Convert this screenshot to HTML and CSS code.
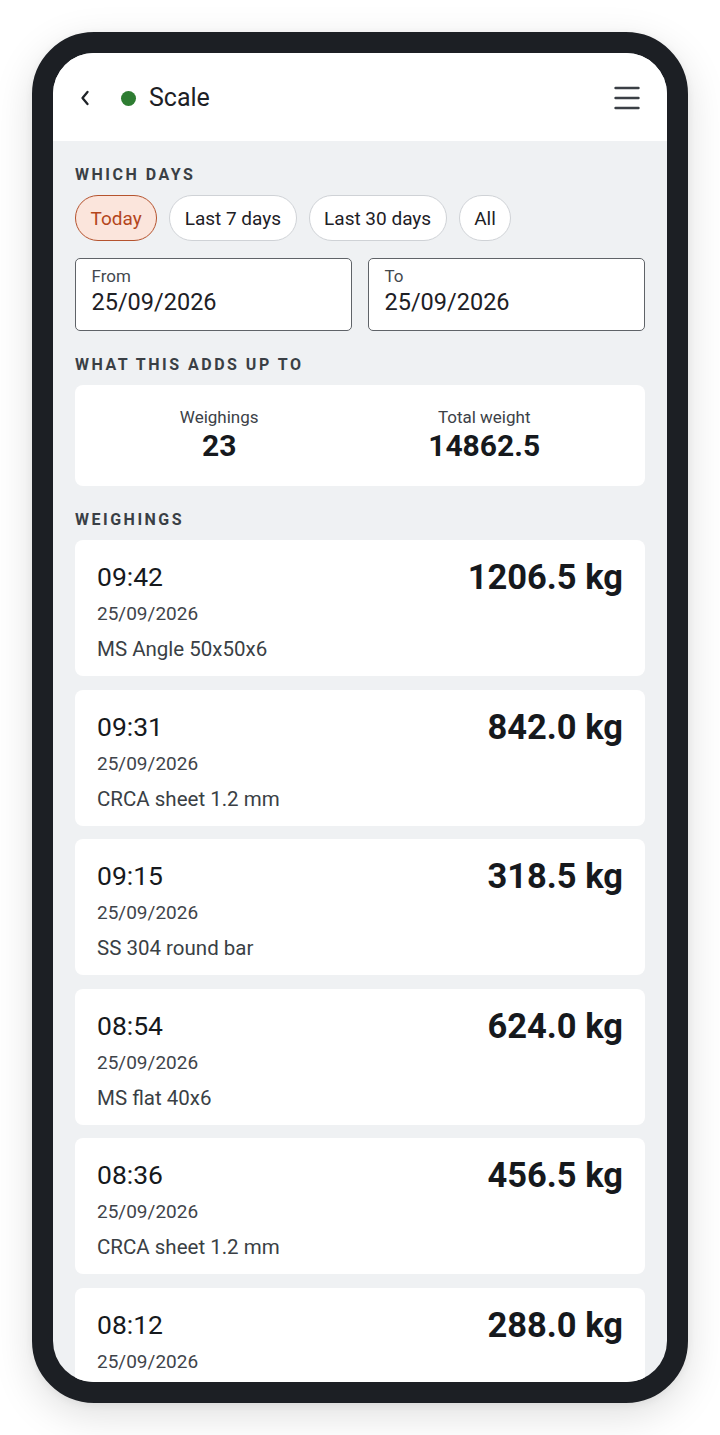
FILE: index.html
```html
<!DOCTYPE html>
<html lang="en">
<head>
<meta charset="utf-8">
<title>Scale</title>
<link rel="stylesheet" href="styles.css">
</head>
<body>
<div class="phone">
  <div class="screen">
    <header class="topbar">
      <div class="topbar-left">
        <svg class="back" width="10" height="16" viewBox="0 0 10 16" aria-hidden="true"><polyline points="7.5,2 2.5,8 7.5,14" fill="none" stroke="#1f2328" stroke-width="2.3" stroke-linecap="round" stroke-linejoin="round"/></svg>
        <span class="dot"></span>
        <span class="title">Scale</span>
      </div>
      <svg class="menu" width="26" height="24" viewBox="0 0 26 24" aria-hidden="true"><g stroke="#3b3f45" stroke-width="2.4" stroke-linecap="round"><line x1="1.5" y1="2" x2="24.5" y2="2"/><line x1="1.5" y1="12" x2="24.5" y2="12"/><line x1="1.5" y1="22" x2="24.5" y2="22"/></g></svg>
    </header>
    <main class="content">
      <section class="section">
        <h2 class="label">WHICH DAYS</h2>
        <div class="chips">
          <span class="chip chip-active">Today</span>
          <span class="chip">Last 7 days</span>
          <span class="chip">Last 30 days</span>
          <span class="chip">All</span>
        </div>
        <div class="dates">
          <div class="date-field">
            <span class="date-label">From</span>
            <span class="date-value">25/09/2026</span>
          </div>
          <div class="date-field">
            <span class="date-label">To</span>
            <span class="date-value">25/09/2026</span>
          </div>
        </div>
      </section>
      <section class="section">
        <h2 class="label">WHAT THIS ADDS UP TO</h2>
        <div class="summary">
          <div class="stat">
            <span class="stat-label">Weighings</span>
            <span class="stat-value">23</span>
          </div>
          <div class="stat">
            <span class="stat-label">Total weight</span>
            <span class="stat-value">14862.5</span>
          </div>
        </div>
      </section>
      <section class="section">
        <h2 class="label">WEIGHINGS</h2>
        <div class="list">
          <div class="card">
            <div class="card-row"><span class="time">09:42</span><span class="weight">1206.5 kg</span></div>
            <div class="date">25/09/2026</div>
            <div class="material">MS Angle 50x50x6</div>
          </div>
          <div class="card">
            <div class="card-row"><span class="time">09:31</span><span class="weight">842.0 kg</span></div>
            <div class="date">25/09/2026</div>
            <div class="material">CRCA sheet 1.2 mm</div>
          </div>
          <div class="card">
            <div class="card-row"><span class="time">09:15</span><span class="weight">318.5 kg</span></div>
            <div class="date">25/09/2026</div>
            <div class="material">SS 304 round bar</div>
          </div>
          <div class="card">
            <div class="card-row"><span class="time">08:54</span><span class="weight">624.0 kg</span></div>
            <div class="date">25/09/2026</div>
            <div class="material">MS flat 40x6</div>
          </div>
          <div class="card">
            <div class="card-row"><span class="time">08:36</span><span class="weight">456.5 kg</span></div>
            <div class="date">25/09/2026</div>
            <div class="material">CRCA sheet 1.2 mm</div>
          </div>
          <div class="card">
            <div class="card-row"><span class="time">08:12</span><span class="weight">288.0 kg</span></div>
            <div class="date">25/09/2026</div>
          </div>
        </div>
      </section>
    </main>
  </div>
</div>
</body>
</html>
```

FILE: styles.css
```css
* { box-sizing: border-box; }

html, body {
  margin: 0;
  padding: 0;
  background: #ffffff;
}

body {
  font-family: Roboto, "Noto Sans", "Liberation Sans", sans-serif;
  color: #1d2025;
  padding: 32px;
}

.phone {
  width: 656px;
  height: 1371px;
  border: 21px solid #1c1f24;
  border-radius: 62px;
  background: #1c1f24;
  box-shadow: 0 12px 40px rgba(0, 0, 0, 0.13), 0 2px 8px rgba(0, 0, 0, 0.06);
}

.screen {
  width: 100%;
  height: 100%;
  border-radius: 41px;
  overflow: hidden;
  background: #eff1f3;
  display: flex;
  flex-direction: column;
}

.topbar {
  flex: 0 0 88px;
  background: #ffffff;
  display: flex;
  align-items: center;
  justify-content: space-between;
  padding: 0 27px;
}

.topbar-left {
  display: flex;
  align-items: center;
  padding-top: 2px;
}

.back { display: block; }

.dot {
  width: 15px;
  height: 15px;
  border-radius: 50%;
  background: #2e7d32;
  margin-left: 31px;
}

.title {
  font-size: 25px;
  line-height: 30px;
  margin-left: 13px;
  color: #1d2025;
}

.menu { display: block; margin-top: 2px; }

.content {
  flex: 1;
  padding: 24px 22px 0;
  display: flex;
  flex-direction: column;
  gap: 24px;
}

.label {
  margin: 0 0 10px;
  font-size: 16px;
  line-height: 20px;
  font-weight: 700;
  letter-spacing: 2.5px;
  color: #3a3f45;
}

.chips {
  display: flex;
  gap: 12px;
  margin-bottom: 17px;
}

.chip {
  height: 46px;
  display: flex;
  align-items: center;
  padding: 0 14.5px;
  border: 1.5px solid #cfd2d6;
  border-radius: 23px;
  background: #ffffff;
  font-size: 19px;
  color: #1d2025;
}

.chip-active {
  background: #fbe5dc;
  border-color: #b5532e;
  color: #b4461c;
}

.dates {
  display: grid;
  grid-template-columns: 1fr 1fr;
  gap: 16px;
}

.date-field {
  display: flex;
  flex-direction: column;
  border: 1.5px solid #5f6368;
  border-radius: 5px;
  background: #ffffff;
  padding: 7px 15.5px 14px;
  height: 73px;
}

.date-label {
  font-size: 17px;
  line-height: 21px;
  color: #43484e;
}

.date-value {
  font-size: 23.5px;
  line-height: 28px;
  margin-top: 1px;
  color: #1d2025;
}

.summary {
  background: #ffffff;
  border-radius: 8px;
  display: flex;
  justify-content: space-around;
  padding: 21px 20px 22px;
}

.stat {
  display: flex;
  flex-direction: column;
  align-items: center;
}

.stat-label {
  font-size: 17px;
  line-height: 22px;
  color: #3c4147;
}

.stat-value {
  font-size: 30px;
  line-height: 36px;
  font-weight: 700;
  color: #16191d;
}

.section-last { margin-top: -1px; }

.list {
  display: flex;
  flex-direction: column;
  gap: 13.5px;
}

.card {
  background: #ffffff;
  border-radius: 8px;
  padding: 17px 22px 15px;
  height: 136px;
}

.card-row {
  display: flex;
  align-items: center;
  justify-content: space-between;
  height: 40px;
}

.time {
  font-size: 26.5px;
  line-height: 32px;
  color: #16191d;
}

.weight {
  font-size: 34.5px;
  line-height: 40px;
  font-weight: 700;
  color: #16191d;
}

.date {
  font-size: 19px;
  line-height: 24px;
  margin-top: 5px;
  color: #3f444a;
}

.material {
  font-size: 20.5px;
  line-height: 24px;
  margin-top: 11px;
  color: #3a3f45;
}
```
